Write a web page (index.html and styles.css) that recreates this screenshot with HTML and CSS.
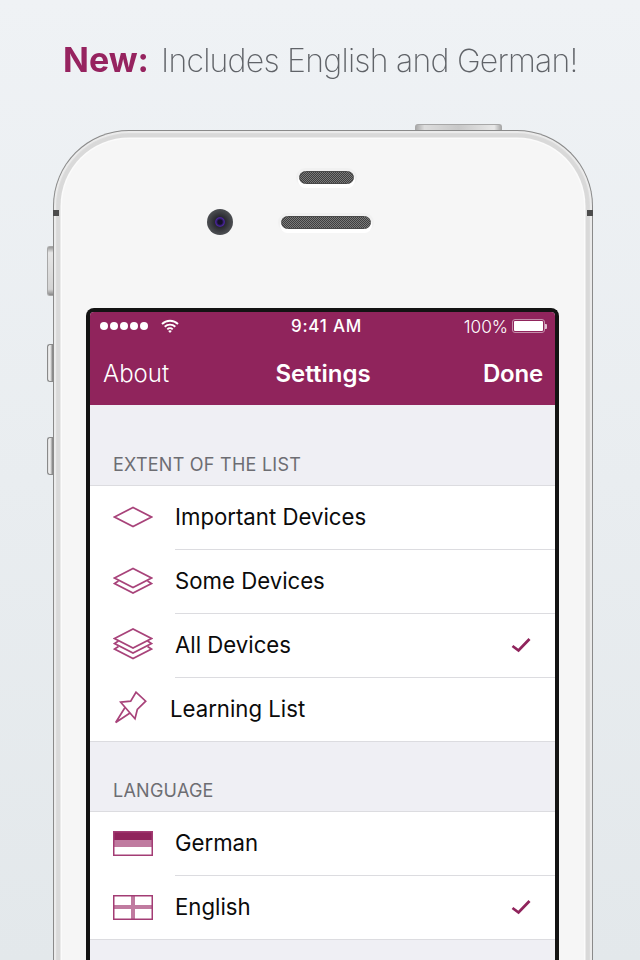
FILE: index.html
```html
<!DOCTYPE html>
<html lang="en">
<head>
<meta charset="utf-8">
<title>Settings</title>
<link rel="stylesheet" href="styles.css">
</head>
<body>
<h1 class="headline"><strong class="headline-new">New:</strong> <span class="headline-rest">Includes English and German!</span></h1>
<div class="phone">
  <span class="hw-top"></span>
  <span class="hw-side hw-mute"></span>
  <span class="hw-side hw-vol hw-up"></span>
  <span class="hw-side hw-vol hw-down"></span>
  <span class="antenna antenna-l"></span>
  <span class="antenna antenna-r"></span>
  <div class="face">
    <div class="hardware">
      <div class="earpiece"></div>
      <div class="sensor-row">
        <div class="camera"><span class="lens"></span></div>
        <div class="grille"></div>
      </div>
    </div>
    <div class="screen">
      <header class="nav">
        <div class="status">
          <div class="status-left">
            <span class="signal"><i></i><i></i><i></i><i></i><i></i></span>
            <svg class="wifi" width="18" height="14" viewBox="0 0 18 14"><path d="M1 5a11.500 11.500 0 0 1 16 0M3.700 7.800a7.600 7.600 0 0 1 10.600 0M6.300 10.400a3.900 3.900 0 0 1 5.400 0" fill="none" stroke="#fff" stroke-width="1.900"/><path d="M9 14l-1.800-2a2.600 2.600 0 0 1 3.600 0z" fill="#fff"/></svg>
          </div>
          <div class="status-time">9:41 AM</div>
          <div class="status-right">
            <span class="pct">100%</span>
            <span class="battery"><span class="battery-fill"></span></span>
            <span class="battery-nub"></span>
          </div>
        </div>
        <div class="bar">
          <span class="bar-left">About</span>
          <span class="bar-title">Settings</span>
          <span class="bar-right">Done</span>
        </div>
      </header>
      <main class="content">
        <div class="section-label section-label-first">EXTENT OF THE LIST</div>
        <ul class="list">
          <li class="row">
            <svg class="icon" width="40" height="24" viewBox="0 0 40 24"><path d="M1.500 12L20 2.500L38.500 12L20 21.500Z" class="ln"/></svg>
            <div class="row-body">Important Devices</div>
          </li>
          <li class="row">
            <svg class="icon" width="40" height="30" viewBox="0 0 40 30"><path d="M1.500 12L20 2.500L38.500 12L20 21.500Z" class="ln"/><path d="M5.500 15L1.500 17.500L20 27L38.500 17.500L34.500 15" class="ln"/></svg>
            <div class="row-body">Some Devices</div>
          </li>
          <li class="row">
            <svg class="icon" width="40" height="34" viewBox="0 0 40 34"><path d="M1.500 10.500L20 1L38.500 10.500L20 20Z" class="ln"/><path d="M5.500 13L1.500 15.500L20 25L38.500 15.500L34.500 13" class="ln"/><path d="M5.500 18.500L1.500 21L20 30.500L38.500 21L34.500 18.500" class="ln"/></svg>
            <div class="row-body row-body-check">All Devices
              <svg class="check" width="20" height="16" viewBox="0 0 20 16"><path d="M1.500 9L7.500 13.500L18.500 2" class="ck"/></svg>
            </div>
          </li>
          <li class="row">
            <svg class="icon icon-pin" width="35" height="35" viewBox="0 0 35 35"><path d="M7.700 11.200L17.700 10.200L23 1.200L32.700 10.200L24.300 18.500L22 27.800Z" class="ln"/><path d="M12 16.500L2.700 31.500L17 22" class="ln"/></svg>
            <div class="row-body row-body-last">Learning List</div>
          </li>
        </ul>
        <div class="section-label">LANGUAGE</div>
        <ul class="list">
          <li class="row">
            <svg class="icon" width="40" height="26" viewBox="0 0 40 26"><rect x="0" y="1" width="40" height="9" class="f-dark"/><rect x="0" y="10" width="40" height="7" class="f-mid"/><rect x=".75" y="1.750" width="38.500" height="23.500" class="f-out"/></svg>
            <div class="row-body">German</div>
          </li>
          <li class="row">
            <svg class="icon" width="40" height="26" viewBox="0 0 40 26"><rect x="18" y="1" width="4" height="24" class="f-mid"/><rect x="0" y="11" width="40" height="4" class="f-mid"/><rect x=".75" y="1.750" width="38.500" height="23.500" class="f-out"/></svg>
            <div class="row-body row-body-check row-body-last">English
              <svg class="check" width="20" height="16" viewBox="0 0 20 16"><path d="M1.500 9L7.500 13.500L18.500 2" class="ck"/></svg>
            </div>
          </li>
        </ul>
        <div class="tail"></div>
      </main>
    </div>
  </div>
</div>
</body>
</html>
```
FILE: styles.css
```css
* { box-sizing: border-box; }
html, body { margin: 0; height: 960px; overflow: hidden; }
body {
  background: linear-gradient(#eff2f5, #e3e8eb);
  font-family: Inter, "Liberation Sans", sans-serif;
}
.headline {
  margin: 0;
  height: 130px;
  padding: 40px 0 0 63px;
  display: flex;
  align-items: baseline;
  gap: 12px;
  font-size: 32px;
  line-height: 40px;
  font-weight: 200;
  color: #606368;
  will-change: opacity;
}
.headline-new { font-weight: 700; font-size: 34px; color: #96235f; }
.headline-rest { letter-spacing: -0.75px; }

.phone {
  position: relative;
  width: 540px;
  height: 900px;
  margin-left: 53px;
  padding: 8px 8px 0 8px;
  background: #d9d9d9;
  border: 1px solid #8a8a8a;
  border-bottom: 0;
  border-radius: 76px 76px 0 0;
  box-shadow: inset 0 0 0 2px #ebebeb, inset 0 0 0 3px #dcdcdc;
}
.hw-top {
  position: absolute;
  left: 361px;
  top: -7px;
  width: 87px;
  height: 6px;
  background: linear-gradient(90deg, #aaa, #ddd 10%, #c8c8c8 50%, #e8e8e8 92%, #aaa);
  border: 1px solid #a8a8a8;
  border-bottom: 0;
  border-radius: 3px 3px 0 0;
}
.hw-side {
  position: absolute;
  left: -7px;
  width: 6px;
  background: linear-gradient(#999, #e6e6e6 12%, #d4d4d4 88%, #888);
  border: 1px solid #a8a8a8;
  border-right: 0;
  border-radius: 3px 0 0 3px;
}
.hw-mute { top: 115px; height: 50px; }
.hw-vol {
  height: 38px;
  background: linear-gradient(90deg, #ddd, #f2f2f2 40%, #777);
  border-color: #8a8a8a;
}
.hw-up { top: 213px; }
.hw-down { top: 306px; }
.antenna {
  position: absolute;
  top: 79px;
  width: 6px;
  height: 6px;
  background: #4c4c4c;
}
.antenna-l { left: -1px; }
.antenna-r { right: -1px; }

.face {
  height: 100%;
  background: #f6f6f6;
  border-radius: 67px 67px 0 0;
  box-shadow: 0 0 0 1.500px #fbfbfb;
}
.hardware { height: 169px; padding-top: 32px; }
.earpiece, .grille {
  height: 13px;
  border-radius: 7px;
  border: 1px solid #4a4a4a;
  background: conic-gradient(#3f3f3f 25%, #7a7a7a 0 50%, #3f3f3f 0 75%, #7a7a7a 0) 0 0 / 2px 2px;
  box-shadow: 0 3px 0 1px #fff, 0 0 0 3px #f1f1f1;
}
.earpiece { width: 55px; margin-left: 237px; }
.sensor-row {
  display: flex;
  align-items: center;
  gap: 48px;
  margin: 25px 0 0 145px;
}
.grille { width: 90px; }
.camera {
  width: 26px;
  height: 26px;
  border-radius: 50%;
  background: radial-gradient(circle, #2a2a30 0 30%, #45474b 60%, #5e6064 100%);
  display: flex;
  align-items: center;
  justify-content: center;
}
.lens {
  width: 10px;
  height: 10px;
  border-radius: 50%;
  background: radial-gradient(circle, #14102a 0 30%, #4a259c 60%, #201a3a 100%);
}

.screen {
  width: 473px;
  margin-left: 24px;
  border: solid #131313;
  border-width: 4px 4px 0 4px;
  border-radius: 8px 8px 0 0;
  overflow: hidden;
  background: #efeff4;
  color: #0b0b0b;
  will-change: opacity;
}
.nav { height: 93px; background: #90245c; color: #fff; }
.status {
  display: grid;
  grid-template-columns: 1fr auto 1fr;
  align-items: center;
  height: 28px;
  padding: 0 8px 0 10px;
}
.status-left { display: flex; align-items: center; gap: 13px; }
.signal { display: flex; gap: 2px; }
.signal i { width: 8px; height: 8px; border-radius: 50%; background: #fff; }
.wifi { display: block; }
.status-time { font-size: 17px; font-weight: 500; letter-spacing: .75px; margin-left: 6px; }
.status-right { display: flex; align-items: center; justify-content: flex-end; }
.pct { font-size: 17.300px; font-weight: 300; margin-right: 4px; }
.battery {
  width: 33px;
  height: 14px;
  padding: 1px;
  border: 1px solid #c58fab;
  border-radius: 3px;
  display: block;
}
.battery-fill { display: block; height: 100%; background: #fff; border-radius: 1px; }
.battery-nub { width: 2px; height: 5px; background: #e0c0d0; border-radius: 0 1px 1px 0; }
.bar {
  display: grid;
  grid-template-columns: 1fr auto 1fr;
  align-items: center;
  height: 38px;
  margin-top: 14px;
  padding: 0 12px 0 13px;
  font-size: 24px;
}
.bar-left { font-weight: 300; }
.bar-title { font-weight: 600; }
.bar-right { font-weight: 600; text-align: right; letter-spacing: -.2px; }

.section-label {
  display: flex;
  align-items: flex-end;
  height: 69px;
  padding: 0 0 9px 23px;
  font-size: 18px;
  line-height: 22px;
  color: #6d6d72;
  letter-spacing: .25px;
}
.section-label-first { height: 80px; }
.list {
  list-style: none;
  margin: 0;
  padding: 0;
  background: #fff;
  border-top: 1px solid #dcdce0;
  border-bottom: 1px solid #dcdce0;
}
.row {
  display: flex;
  align-items: center;
  height: 64px;
  padding-left: 23px;
  font-size: 22.200px;
}
.list .row:last-child { height: 63px; }
.icon { flex: none; width: 40px; margin: 0 22px 2px 0; display: block; }
.icon-pin { width: 35px; }
.row-body {
  flex: 1;
  align-self: stretch;
  display: flex;
  align-items: center;
  justify-content: space-between;
  padding: 0 24px 2px 0;
  border-bottom: 1px solid #dcdce0;
}
.row-body-last { border-bottom: 0; padding-bottom: 2px; }
.check { display: block; }
.ln { fill: none; stroke: #a8437a; stroke-width: 1.700; stroke-linejoin: miter; }
.ck { fill: none; stroke: #90245c; stroke-width: 2.800; }
.f-dark { fill: #90245c; }
.f-mid { fill: #c07ba0; }
.f-out { fill: none; stroke: #a33c74; stroke-width: 1.500; }
.tail { height: 40px; }
```
